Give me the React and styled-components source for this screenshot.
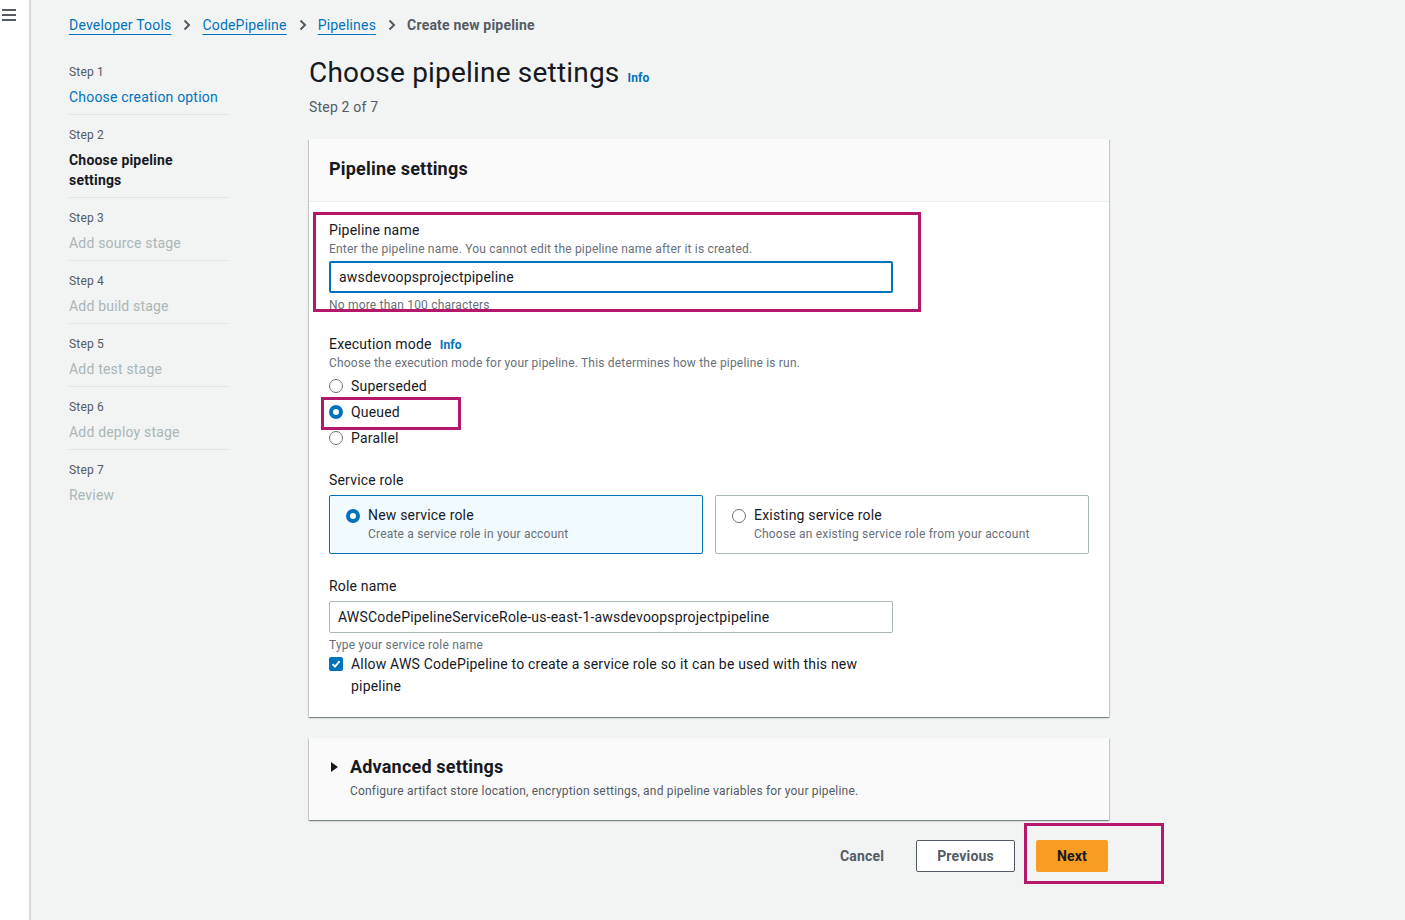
import React from "react";
import styled, { createGlobalStyle } from "styled-components";

const GlobalStyle = createGlobalStyle`
  html, body {
    margin: 0;
    padding: 0;
    background: #f2f3f3;
    font-family: Roboto, "Liberation Sans", sans-serif;
    letter-spacing: 0.012em;
    color: #16191f;
  }
  * { box-sizing: border-box; }
`;

const Shell = styled.div`
  display: flex;
  min-height: 100vh;
`;

const Rail = styled.div`
  width: 31px;
  flex-shrink: 0;
  background: #fff;
  border-right: 2px solid #d5dbdb;
  padding: 7px 0 0 2px;
`;

const Main = styled.div`
  flex: 1;
  padding-left: 38px;
`;

const Crumbs = styled.nav`
  display: flex;
  align-items: center;
  padding-top: 16px;
  height: 34px;
  font-size: 14px;
  line-height: 18px;
`;

const CrumbLink = styled.a`
  color: #0073bb;
  text-decoration: underline;
  text-underline-offset: 4px;
`;

const CrumbCurrent = styled.span`
  color: #545b64;
  font-weight: 700;
`;

const Sep = styled.span`
  display: inline-flex;
  margin: 0 11px 0 12px;
  color: #545b64;
`;

const Columns = styled.div`
  display: flex;
  margin-top: 18px;
  gap: 80px;
`;

const SideNav = styled.ol`
  list-style: none;
  margin: 0;
  padding: 0;
  width: 160px;
  flex-shrink: 0;
`;

const NavItem = styled.li`
  padding: 12px 0 7px;
  border-bottom: ${(p) => (p.$last ? "none" : "1px solid #e1e4e4")};
`;

const StepLabel = styled.div`
  font-size: 12px;
  line-height: 16px;
  color: #545b64;
`;

const StepName = styled.div`
  margin-top: 7px;
  max-width: 150px;
  font-size: 14px;
  line-height: 20px;
  color: ${(p) => (p.$state === "done" ? "#0073bb" : p.$state === "active" ? "#16191f" : "#aab7b8")};
  font-weight: ${(p) => (p.$state === "active" ? 700 : 400)};
`;

const Content = styled.div`
  width: 800px;
  padding-top: 3px;
`;

const Title = styled.h1`
  margin: 0;
  font-size: 28px;
  line-height: 36px;
  font-weight: 400;
  color: #16191f;
`;

const InfoLink = styled.span`
  margin-left: 8px;
  font-size: 12px;
  line-height: 1;
  font-weight: 700;
  color: #0073bb;
`;

const StepOf = styled.div`
  margin-top: 6px;
  font-size: 14px;
  line-height: 20px;
  color: #545b64;
`;

const Panel = styled.section`
  margin-top: 22px;
  background: #fff;
  box-shadow: 0 1px 1px 0 rgba(0, 28, 36, 0.3), 1px 1px 1px 0 rgba(0, 28, 36, 0.15),
    -1px 1px 1px 0 rgba(0, 28, 36, 0.15);
`;

const PanelHeader = styled.header`
  background: #fafafa;
  border-bottom: 1px solid #eaeded;
  padding: 18px 20px 20px;
  font-size: 18px;
  line-height: 24px;
  font-weight: 700;
`;

const PanelBody = styled.div`
  padding: 18px 20px 20px;
`;

const Field = styled.div`
  position: relative;
  margin-top: ${(p) => p.$top || 0}px;
`;

const Label = styled.div`
  font-size: 14px;
  line-height: 20px;
  color: #16191f;
`;

const Desc = styled.div`
  font-size: 12px;
  line-height: 16px;
  color: #687078;
  margin-top: ${(p) => p.$top || 0}px;
`;

const Input = styled.div`
  margin-top: ${(p) => p.$top || 4}px;
  width: 564px;
  height: 32px;
  display: flex;
  align-items: center;
  padding-left: 8px;
  border: ${(p) => (p.$focus ? "2px solid #0073bb" : "1px solid #aab7b8")};
  border-radius: 2px;
  background: #fff;
  font-size: 14px;
  color: #16191f;
`;

const Highlight = styled.div`
  position: absolute;
  border: 3px solid #b5176a;
  pointer-events: none;
`;

const RadioList = styled.div`
  margin-top: 5px;
  display: flex;
  flex-direction: column;
  gap: 6px;
`;

const RadioRow = styled.div`
  position: relative;
  display: flex;
  align-items: center;
  gap: 8px;
  font-size: 14px;
  line-height: 20px;
`;

const Radio = styled.span`
  width: 14px;
  height: 14px;
  flex-shrink: 0;
  border-radius: 50%;
  background: #fff;
  border: ${(p) => (p.$on ? "4px solid #0073bb" : "1.5px solid #687078")};
`;

const Tiles = styled.div`
  margin-top: 5px;
  display: grid;
  grid-template-columns: 374px 374px;
  gap: 12px;
`;

const Tile = styled.div`
  height: 59px;
  display: flex;
  align-items: flex-start;
  gap: 8px;
  padding: 13px 16px 11px;
  border: 1px solid ${(p) => (p.$on ? "#0073bb" : "#aab7b8")};
  background: ${(p) => (p.$on ? "#f1faff" : "#fff")};
  border-radius: 2px;
`;

const TileText = styled.div`
  margin-top: -4px;
`;

const CheckRow = styled.div`
  display: flex;
  align-items: flex-start;
  gap: 8px;
  width: 540px;
  font-size: 14px;
  line-height: 22px;
`;

const CheckBox = styled.span`
  margin-top: 4px;
  width: 14px;
  height: 14px;
  flex-shrink: 0;
  background: #0073bb;
  border-radius: 2px;
  display: flex;
  align-items: center;
  justify-content: center;
`;

const Expandable = styled(Panel)`
  margin-top: 21px;
  background: #fafafa;
  padding: 17px 20px 21px 22px;
`;

const ExpandTitle = styled.div`
  display: flex;
  align-items: center;
  gap: 12px;
  font-size: 18px;
  line-height: 24px;
  font-weight: 700;
`;

const Caret = styled.span`
  width: 0;
  height: 0;
  border-top: 5px solid transparent;
  border-bottom: 5px solid transparent;
  border-left: 7px solid #16191f;
`;

const ExpandDesc = styled(Desc)`
  margin: 4px 0 0 19px;
  color: #545b64;
`;

const Actions = styled.div`
  margin-top: 20px;
  display: flex;
  justify-content: flex-end;
  align-items: center;
  padding-right: 1px;
`;

const Button = styled.button`
  position: relative;
  height: 32px;
  padding: 0 20px;
  margin-left: ${(p) => p.$gap || 0}px;
  font-family: inherit;
  letter-spacing: inherit;
  font-size: 14px;
  font-weight: 700;
  border-radius: 2px;
  cursor: pointer;
  border: ${(p) =>
    p.$variant === "primary" ? "1px solid #f89c24" : p.$variant === "normal" ? "1px solid #545b64" : "1px solid transparent"};
  background: ${(p) => (p.$variant === "primary" ? "#f89c24" : p.$variant === "normal" ? "#fff" : "transparent")};
  color: ${(p) => (p.$variant === "primary" ? "#16191f" : "#545b64")};
`;

const Chevron = () => (
  <svg width="8" height="12" viewBox="0 0 8 12">
    <path d="M1.5 1.5 L6 6 L1.5 10.5" fill="none" stroke="currentColor" strokeWidth="2" />
  </svg>
);

const Hamburger = () => (
  <svg width="16" height="14" viewBox="0 0 16 14">
    <rect x="0" y="1" width="14" height="2" fill="#545b64" />
    <rect x="0" y="6" width="14" height="2" fill="#545b64" />
    <rect x="0" y="11" width="14" height="2" fill="#545b64" />
  </svg>
);

const steps = [
  { n: 1, name: "Choose creation option", state: "done" },
  { n: 2, name: "Choose pipeline settings", state: "active" },
  { n: 3, name: "Add source stage" },
  { n: 4, name: "Add build stage" },
  { n: 5, name: "Add test stage" },
  { n: 6, name: "Add deploy stage" },
  { n: 7, name: "Review" },
];

const crumbs = ["Developer Tools", "CodePipeline", "Pipelines"];

export default function App() {
  return (
    <>
      <GlobalStyle />
      <Shell>
        <Rail>
          <Hamburger />
        </Rail>
        <Main>
          <Crumbs>
            {crumbs.map((c) => (
              <React.Fragment key={c}>
                <CrumbLink>{c}</CrumbLink>
                <Sep>
                  <Chevron />
                </Sep>
              </React.Fragment>
            ))}
            <CrumbCurrent>Create new pipeline</CrumbCurrent>
          </Crumbs>

          <Columns>
            <SideNav>
              {steps.map((s, i) => (
                <NavItem key={s.n} $last={i === steps.length - 1}>
                  <StepLabel>Step {s.n}</StepLabel>
                  <StepName $state={s.state}>{s.name}</StepName>
                </NavItem>
              ))}
            </SideNav>

            <Content>
              <Title>
                Choose pipeline settings
                <InfoLink>Info</InfoLink>
              </Title>
              <StepOf>Step 2 of 7</StepOf>

              <Panel>
                <PanelHeader>Pipeline settings</PanelHeader>
                <PanelBody>
                  <Field>
                    <Label>Pipeline name</Label>
                    <Desc $top={1}>Enter the pipeline name. You cannot edit the pipeline name after it is created.</Desc>
                    <Input $focus>awsdevoopsprojectpipeline</Input>
                    <Desc $top={4}>No more than 100 characters</Desc>
                    <Highlight style={{ left: -16, top: -8, width: 608, height: 100 }} />
                  </Field>

                  <Field $top={21}>
                    <Label>
                      Execution mode
                      <InfoLink>Info</InfoLink>
                    </Label>
                    <Desc $top={1}>Choose the execution mode for your pipeline. This determines how the pipeline is run.</Desc>
                    <RadioList>
                      <RadioRow>
                        <Radio />
                        Superseded
                      </RadioRow>
                      <RadioRow>
                        <Radio $on />
                        Queued
                        <Highlight style={{ left: -8, top: -5, width: 140, height: 33 }} />
                      </RadioRow>
                      <RadioRow>
                        <Radio />
                        Parallel
                      </RadioRow>
                    </RadioList>
                  </Field>

                  <Field $top={22}>
                    <Label>Service role</Label>
                    <Tiles>
                      <Tile $on>
                        <Radio $on />
                        <TileText>
                          <Label>New service role</Label>
                          <Desc $top={1}>Create a service role in your account</Desc>
                        </TileText>
                      </Tile>
                      <Tile>
                        <Radio />
                        <TileText>
                          <Label>Existing service role</Label>
                          <Desc $top={1}>Choose an existing service role from your account</Desc>
                        </TileText>
                      </Tile>
                    </Tiles>
                  </Field>

                  <Field $top={22}>
                    <Label>Role name</Label>
                    <Input $top={5}>AWSCodePipelineServiceRole-us-east-1-awsdevoopsprojectpipeline</Input>
                    <Desc $top={4}>Type your service role name</Desc>
                    <CheckRow>
                      <CheckBox>
                        <svg width="10" height="10" viewBox="0 0 10 10">
                          <path d="M1.5 5.2 L4 7.6 L8.6 2.2" fill="none" stroke="#fff" strokeWidth="1.8" />
                        </svg>
                      </CheckBox>
                      <span>Allow AWS CodePipeline to create a service role so it can be used with this new pipeline</span>
                    </CheckRow>
                  </Field>
                </PanelBody>
              </Panel>

              <Expandable>
                <ExpandTitle>
                  <Caret />
                  Advanced settings
                </ExpandTitle>
                <ExpandDesc>Configure artifact store location, encryption settings, and pipeline variables for your pipeline.</ExpandDesc>
              </Expandable>

              <Actions>
                <Button $variant="link">Cancel</Button>
                <Button $variant="normal" $gap={11}>
                  Previous
                </Button>
                <Button $variant="primary" $gap={21}>
                  Next
                  <Highlight style={{ left: -13, top: -18, width: 140, height: 61 }} />
                </Button>
              </Actions>
            </Content>
          </Columns>
        </Main>
      </Shell>
    </>
  );
}
